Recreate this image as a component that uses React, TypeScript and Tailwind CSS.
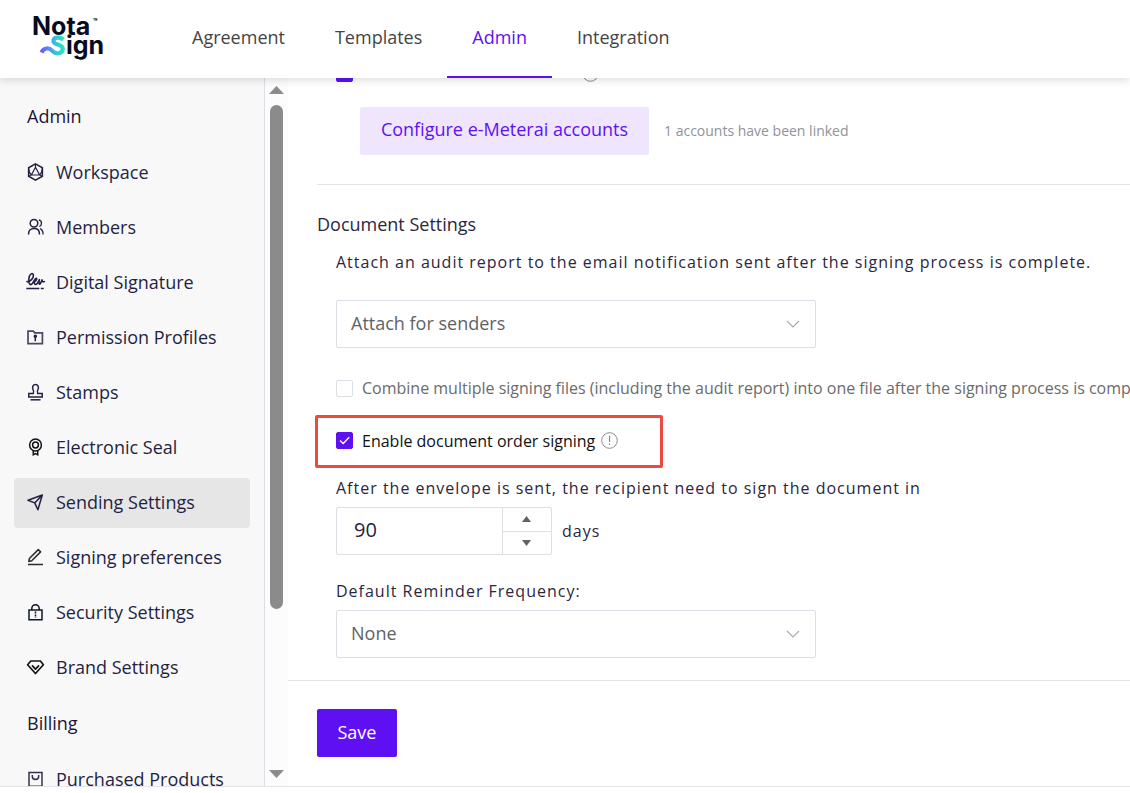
import { useState } from 'react';
import type { ReactNode } from 'react';

const Icon = ({ children, color = '#241f43' }: { children: ReactNode; color?: string }) => (
    <svg
        width="20"
        height="20"
        viewBox="0 0 20 20"
        fill="none"
        stroke={color}
        strokeWidth="1.5"
        className="shrink-0"
        aria-hidden="true"
    >
        {children}
    </svg>
);

const adminItems = [
    {
        label: 'Workspace',
        icon: (
            <Icon>
                <path d="M9.5 1.8 16.4 5.8v8.4l-6.9 4-6.9-4V5.8z" />
                <path
                    d="M9.5 5.2 5.4 13h8.2zM9.5 1.8v3.4M5.4 13l-2.8 1.2M13.6 13l2.8 1.2M2.6 6.4c.2 3 1 5 2.8 6.6M16.4 6.4c-.2 3-1 5-2.8 6.6"
                    strokeWidth="1.2"
                />
            </Icon>
        ),
    },
    {
        label: 'Members',
        icon: (
            <Icon>
                <circle cx="8" cy="6.2" r="3.8" />
                <path d="M2.6 17.4v-.8c0-3.2 2.2-5.2 5.4-5.2s5.4 2 5.4 5.2v.8" />
                <path d="M12.8 2.8c1.7.5 2.7 1.8 2.7 3.4 0 1.5-.8 2.7-2.2 3.3M14.1 11.7c1.9.9 3 2.7 3 5.7" strokeWidth="1.3" />
            </Icon>
        ),
    },
    {
        label: 'Digital Signature',
        icon: (
            <Icon>
                <path
                    d="M1 9.6c3.4.2 6.6-3.4 6.4-6.5C7.2.7 4.2 1.2 3.3 4.5c-1.1 4.2-.5 8.2 1.6 8.1 2.2-.2 3.7-6.3 5.2-6.4 1.4 0 .3 3-1.6 3.5-.3 1.9.2 2.9 1.2 2.8 1.7-.2 2.8-3.2 3.7-4.8-.4 1.9-.7 3.6-.1 4.3.9.7 1.9-2 2.8-4.1.1 1.7.5 2.3 2.3 1.7"
                    strokeWidth="1.6"
                    strokeLinecap="round"
                    strokeLinejoin="round"
                />
                <path d="M.3 16.5h13M14.8 16.5h3" />
            </Icon>
        ),
    },
    {
        label: 'Permission Profiles',
        icon: (
            <Icon color="#4b4765">
                <path d="M2 16.7V4.1h5.3l1.4 1.7h7.7v10.9z" strokeWidth="1.7" />
                <circle cx="9.3" cy="9.3" r="1" fill="#241f43" stroke="#241f43" />
                <path d="M9.3 10v4.2" stroke="#241f43" />
            </Icon>
        ),
    },
    {
        label: 'Stamps',
        icon: (
            <Icon>
                <path d="M2.8 15v-3.5h4.5c.7-1.6.5-2.9-.3-4.2C5.9 5.3 7 2.6 9.5 2.6S13.1 5.3 12 7.3c-.8 1.3-1 2.6-.3 4.2h4.5V15z" />
                <path d="M4.5 17.8h10" />
            </Icon>
        ),
    },
    {
        label: 'Electronic Seal',
        icon: (
            <Icon color="#111118">
                <circle cx="9.5" cy="8" r="5.9" />
                <circle cx="9.5" cy="8" r="2.9" />
                <path d="M7.3 13.6v4.2l2.2-1.3 2.2 1.3v-4.2" />
            </Icon>
        ),
    },
    {
        label: 'Sending Settings',
        icon: (
            <Icon>
                <path d="M16.3 3 2 8.3l6.7 2.6 3.2 6.9zM8.7 10.9 16.3 3" strokeLinejoin="round" />
            </Icon>
        ),
    },
    {
        label: 'Signing preferences',
        icon: (
            <Icon color="#2b2b2b">
                <path d="m12.3 2.6 2.3 2.3-8.9 8.9-2.9.6.6-2.9zM2 17.5h15" strokeLinejoin="round" />
            </Icon>
        ),
    },
    {
        label: 'Security Settings',
        icon: (
            <Icon color="#0d1726">
                <path d="M3 8h13v9.7H3zM5.8 8V6.4a3.7 3.7 0 0 1 7.4 0V8" />
                <path d="M9.5 9.5V16" strokeDasharray="2 1" />
            </Icon>
        ),
    },
    {
        label: 'Brand Settings',
        icon: (
            <Icon color="#161616">
                <path d="M4.8 4h9.6l3 3.7-7.9 8.8-7.9-8.8zM6 8.4l3.5 3.7L13 8.4" strokeWidth="1.7" strokeLinejoin="round" />
            </Icon>
        ),
    },
];

const billingItems = [
    {
        label: 'Purchased Products',
        icon: (
            <Icon color="#35304f">
                <path d="M3 3.5h13v13.8H3z" />
                <path d="M6.3 6v1.3a3.2 3.2 0 0 0 6.4 0V6" />
            </Icon>
        ),
    },
];

const Logo = () => (
    <svg width="84" height="56" viewBox="0 0 84 56" role="img" aria-label="Nota Sign">
        <defs>
            <linearGradient id="swoosh" gradientUnits="userSpaceOnUse" x1="11" y1="0" x2="37" y2="0">
                <stop offset="0" stopColor="#6b4bfa" />
                <stop offset="0.4" stopColor="#5b8ff5" />
                <stop offset="0.65" stopColor="#2cc9d8" />
                <stop offset="1" stopColor="#2be8b4" />
            </linearGradient>
        </defs>
        <text fontFamily="Inter, sans-serif" fontWeight="700" fontSize="25" fill="#060b22">
            <tspan x="4" y="25">Nota</tspan>
            <tspan x="65" y="14" fontSize="7">™</tspan>
            <tspan x="38" y="44">ign</tspan>
        </text>
        <path
            d="M13.5 42.5C16 37.5 21 37.5 24 40.5C27.5 44.8 34.8 44 34.8 38.8C34.8 33.5 25.5 35.5 25.5 31C25.5 27 31.5 26.5 35.5 29.5"
            fill="none"
            stroke="url(#swoosh)"
            strokeWidth="4.2"
        />
    </svg>
);

const InfoIcon = () => (
    <svg width="17" height="17" viewBox="0 0 17 17" fill="none" stroke="#8c8c8c" className="shrink-0" aria-hidden="true">
        <circle cx="8.5" cy="8.5" r="7.8" />
        <path d="M8.5 3.8V10M8.5 11.5V13" strokeWidth="1.2" />
    </svg>
);

interface CheckboxProps {
    checked: boolean;
    onChange: () => void;
    id: string;
    label?: string;
}

const Checkbox = ({ checked, onChange, id, label }: CheckboxProps) => (
    <span className="grid w-[17px] h-[17px] shrink-0">
        <input
            id={id}
            type="checkbox"
            aria-label={label}
            checked={checked}
            onChange={onChange}
            className="col-start-1 row-start-1 w-[17px] h-[17px] appearance-none rounded-xs border border-[#dcdfe6] bg-white checked:border-[#5e10f2] checked:bg-[#5e10f2]"
        />
        {checked && (
            <svg viewBox="0 0 17 17" fill="none" stroke="#fff" strokeWidth="1.3" className="col-start-1 row-start-1 pointer-events-none">
                <path d="m4 8.5 3.2 3 6-6.3" />
            </svg>
        )}
    </span>
);

const Select = ({ id, options }: { id: string; options: string[] }) => (
    <div className="grid items-center w-[480px]">
        <select
            id={id}
            className="col-start-1 row-start-1 h-12 w-full appearance-none rounded-xs border border-[#dcdfe6] bg-white pl-3.5 pr-10 pb-0.5 text-lg text-[#606266]"
        >
            {options.map((option) => (
                <option key={option}>{option}</option>
            ))}
        </select>
        <svg
            width="14"
            height="8"
            viewBox="0 0 14 8"
            fill="none"
            stroke="#a8abb2"
            className="col-start-1 row-start-1 justify-self-end mr-4 pointer-events-none"
        >
            <path d="m1 1 6 6 6-6" strokeWidth="1.2" />
        </svg>
    </div>
);

const NavList = ({ title, items }: { title: string; items: typeof adminItems }) => (
    <section>
        <h2 className="h-[52px] mb-[5px] pl-[13px] pb-0.5 flex items-center text-lg font-medium text-[#1b1537]">{title}</h2>
        <ul>
            {items.map((item) => (
                <li key={item.label} className="mb-[5px]">
                    <a
                        href="#"
                        className={`flex items-center gap-2.5 h-[50px] pl-3 pb-0.5 rounded-sm text-lg text-[#241f43] whitespace-nowrap ${
                            item.label === 'Sending Settings' ? 'bg-[#e6e6e6]' : ''
                        }`}
                    >
                        {item.icon}
                        {item.label}
                    </a>
                </li>
            ))}
        </ul>
    </section>
);

const App = () => {
    const [meterai, setMeterai] = useState(true);
    const [combine, setCombine] = useState(false);
    const [order, setOrder] = useState(true);
    const [days, setDays] = useState(90);

    return (
        <div className='h-screen flex flex-col bg-white font-["Open_Sans",sans-serif] text-[#2b2640]'>
            <header className="relative z-10 flex h-[78px] shrink-0 bg-white shadow-[0_2px_8px_rgba(0,0,0,0.15)]">
                <a href="#" className="w-[167px] pl-7 pt-2.5">
                    <Logo />
                </a>
                <nav className="flex">
                    {['Agreement', 'Templates', 'Admin', 'Integration'].map((tab) => (
                        <a
                            key={tab}
                            href="#"
                            className={`flex items-center px-[25px] border-b-2 pb-0.5 text-lg ${
                                tab === 'Admin' ? 'border-[#5e10f2] text-[#5e10f2]' : 'border-transparent text-[#444]'
                            }`}
                        >
                            {tab}
                        </a>
                    ))}
                </nav>
            </header>

            <div className="flex flex-1 min-h-0 mb-1.5 border-b border-[#e4e4e8]">
                <aside className="w-[265px] shrink-0 overflow-hidden border-r border-[#dcdde5] bg-[#f8f8f8] px-3.5 pt-[13px]">
                    <NavList title="Admin" items={adminItems} />
                    <NavList title="Billing" items={billingItems} />
                </aside>

                <div className="flex flex-col items-center w-[23px] shrink-0 bg-[#fcfcfc] py-2">
                    <svg width="15" height="8" viewBox="0 0 15 8" fill="#8b8b8b" aria-hidden="true">
                        <path d="M7.5 0 15 8H0z" />
                    </svg>
                    <div className="flex-1 w-[13px] my-[11px]">
                        <div className="h-[77%] rounded-full bg-[#8b8b8b]" />
                    </div>
                    <svg width="15" height="8" viewBox="0 0 15 8" fill="#8b8b8b" aria-hidden="true">
                        <path d="M7.5 8 15 0H0z" />
                    </svg>
                </div>

                <main className="flex flex-col flex-1 min-w-0">
                    <div className="flex-1 min-h-0 overflow-hidden pl-[29px]">
                        <div className="-mt-[13px] ml-[19px] flex justify-between w-[263px]">
                            <Checkbox id="meterai" label="e-Meterai" checked={meterai} onChange={() => setMeterai(!meterai)} />
                            <InfoIcon />
                        </div>
                        <div className="mt-[25px] ml-[43px] flex items-center gap-[15px]">
                            <button className="h-12 w-[289px] rounded-xs bg-[#efe6fe] pb-1 text-lg text-[#5e10f2]">
                                Configure e-Meterai accounts
                            </button>
                            <span className="text-sm text-[#909399]">1 accounts have been linked</span>
                        </div>

                        <h2 className="mt-[29px] border-t border-[#e4e4e8] pt-[25px] text-lg leading-7">Document Settings</h2>

                        <div className="ml-[19px] whitespace-nowrap">
                            <label htmlFor="audit" className="block mt-3 mb-[26px] leading-6 tracking-[1px]">
                                Attach an audit report to the email notification sent after the signing process is complete.
                            </label>
                            <Select id="audit" options={['Attach for senders', 'None']} />

                            <div className="mt-7 flex items-center gap-[9px] leading-6 text-[#6b6b6b]">
                                <Checkbox id="combine" checked={combine} onChange={() => setCombine(!combine)} />
                                <label htmlFor="combine">
                                    Combine multiple signing files (including the audit report) into one file after the signing process is completed
                                </label>
                            </div>

                            <div className="-ml-[21px] mt-[15px] flex items-center h-[53px] w-[348px] rounded-xs border-3 border-[#ee4b40] pl-[18px] pb-0.5 text-[#111]">
                                <Checkbox id="order" checked={order} onChange={() => setOrder(!order)} />
                                <label htmlFor="order" className="ml-[9px] mr-1.5">
                                    Enable document order signing
                                </label>
                                <InfoIcon />
                            </div>

                            <label htmlFor="days" className="block mt-2 mb-[7px] leading-6 tracking-[1px]">
                                After the envelope is sent, the recipient need to sign the document in
                            </label>
                            <div className="flex items-center gap-2.5">
                                <div className="flex h-12 w-[216px] rounded-xs border border-[#dcdfe6]">
                                    <input
                                        id="days"
                                        type="text"
                                        inputMode="numeric"
                                        value={days}
                                        onChange={(e) => setDays(Number(e.target.value) || 0)}
                                        className="min-w-0 flex-1 pl-[17px] pb-0.5 text-xl text-[#241f43]"
                                    />
                                    <div className="flex flex-col w-[49px] border-l border-[#dcdfe6]">
                                        <button
                                            aria-label="Increase"
                                            onClick={() => setDays(days + 1)}
                                            className="flex-1 flex items-center justify-center border-b border-[#dcdfe6] pr-0.5"
                                        >
                                            <svg width="9" height="6" viewBox="0 0 9 6" fill="#606266">
                                                <path d="M4.5 0 9 6H0z" />
                                            </svg>
                                        </button>
                                        <button
                                            aria-label="Decrease"
                                            onClick={() => setDays(days - 1)}
                                            className="flex-1 flex items-center justify-center pr-0.5"
                                        >
                                            <svg width="9" height="6" viewBox="0 0 9 6" fill="#606266">
                                                <path d="M4.5 6 9 0H0z" />
                                            </svg>
                                        </button>
                                    </div>
                                </div>
                                <span className="tracking-[1px]">days</span>
                            </div>

                            <label htmlFor="reminder" className="block mt-6 mb-[7px] leading-6 tracking-[1px]">
                                Default Reminder Frequency:
                            </label>
                            <Select id="reminder" options={['None', 'Every day']} />
                        </div>
                    </div>

                    <footer className="border-t border-[#e4e4e8] pt-7 pb-[29px] pl-[29px]">
                        <button className="h-12 w-20 rounded-xs bg-[#5e10f2] pb-0.5 text-lg font-medium text-white">Save</button>
                    </footer>
                </main>
            </div>
        </div>
    );
};

export default App;
